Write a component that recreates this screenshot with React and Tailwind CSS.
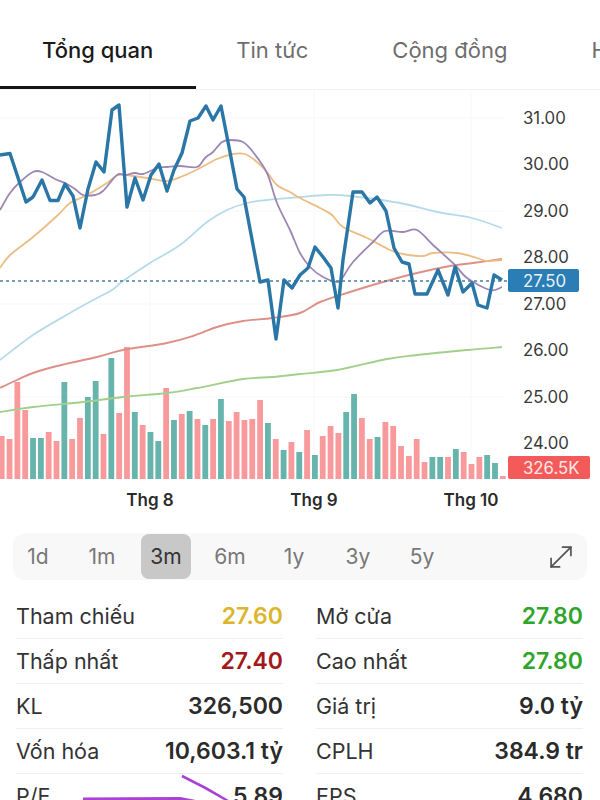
import React from 'react';
import { MoveDiagonal } from 'lucide-react';

const TABS = ['Tổng quan', 'Tin tức', 'Cộng đồng', 'Hồ sơ'];
const RANGES = ['1d', '1m', '3m', '6m', '1y', '3y', '5y'];

const PRICE = [[0,155],[10,153.5],[26,202],[33,197],[42,180],[50,200.5],[58,200.5],[65,184],[73,196],[80,228],[88,189],[96,162],[104,172],[112,110],[119,105],[127,207],[135,178],[143,200],[151,175],[159,164],[167,191],[174,170],[182,153],[190,121],[198,118],[206,106],[213,120],[221,106],[229,147],[237,189],[244,197],[260,282],[268,280],[276,339],[284,280],[292,288],[300,275],[308,268],[315,247],[323,257],[331,268],[338,308],[343,260],[353,192],[362,192],[370,203],[377,197],[386,211],[394,248],[402,262],[409,264],[415,294],[427,294],[438,270],[448,295],[455,267],[463,292],[472,283],[478,305],[487,308],[494,275],[502,280]];
const PURPLE = [[0,210],[10,193],[20,182],[33,172],[42,172],[55,179],[65,183],[75,189],[83,195],[95,195],[103,191],[117,175],[125,175],[135,173],[143,174],[157,168],[167,167],[180,166],[197,167],[205,158],[213,152],[222,142],[230,140],[243,142],[253,152],[267,173],[277,203],[290,230],[300,253],[310,267],[323,277],[338,282],[343,277],[353,262],[373,242],[385,231],[403,232],[417,230],[433,245],[455,265],[467,278],[490,290],[502,287]];
const ORANGE = [[0,268],[10,255],[33,237],[58,215],[70,203],[87,195],[107,183],[118,175],[133,176],[147,178],[167,181],[183,176],[200,168],[217,159],[233,154],[245,154],[257,162],[267,172],[277,185],[290,192],[300,198],[320,208],[332,215],[343,227],[367,238],[390,250],[403,254],[423,256],[433,253],[457,253],[477,258],[487,261],[502,260]];
const SKY = [[0,360],[33,335],[70,313],[97,298],[112,290],[123,281],[150,263],[180,245],[207,222],[227,210],[247,203],[267,200],[300,197],[327,195],[350,196],[400,203],[437,212],[472,218],[502,228]];
const RED = [[0,388],[17,380],[33,373],[57,366],[97,357],[123,350],[167,343],[193,336],[217,327],[243,321],[273,318],[300,313],[320,302],[350,292],[383,282],[417,273],[450,266],[473,263],[502,259]];
const GREEN = [[0,412],[33,407],[83,402],[123,397],[167,393],[197,388],[243,379],[273,377],[300,374],[337,370],[387,359],[417,355],[467,350],[502,347]];

// r = sell, g = buy; number is the top of the bar
const VOLUME = [
  ['r',436],['r',439],['r',382],['r',410],['g',438],['g',438],['r',432],['r',441],['g',382],['r',439],['r',418],['g',397],['g',381],
  ['r',434],['g',358],['r',413],['r',347],['g',412],['r',425],['g',432],['g',441],['r',388],['g',420],['r',414],['g',411],['r',419],
  ['g',425],['r',419],['g',399],['r',421],['r',412],['r',420],['r',419],['r',400],['g',423],['r',439],['g',450],['r',442],['g',452],
  ['r',430],['g',455],['r',436],['r',426],['r',433],['g',412],['g',394],['r',418],['r',439],['g',437],['r',422],['r',426],['r',446],
  ['r',456],['r',439],['r',462],['g',457],['g',457],['r',457],['g',449],['r',452],['r',464],['r',457],['g',455],['g',463],['r',476],
];

const AXIS = [['31.00',118],['30.00',164.5],['29.00',211],['28.00',257.5],['27.00',304],['26.00',350.5],['25.00',397],['24.00',443.5]];
const MONTHS = [['Thg 8',150],['Thg 9',314],['Thg 10',471]];

const STATS = [
  [['Tham chiếu', '27.60', 'text-[#dcb52c]'], ['Mở cửa', '27.80', 'text-[#2fa52b]']],
  [['Thấp nhất', '27.40', 'text-[#a3181c]'], ['Cao nhất', '27.80', 'text-[#2fa52b]']],
  [['KL', '326,500', 'text-[#2b2b2b]'], ['Giá trị', '9.0 tỷ', 'text-[#2b2b2b]']],
  [['Vốn hóa', '10,603.1 tỷ', 'text-[#2b2b2b]'], ['CPLH', '384.9 tr', 'text-[#2b2b2b]']],
  [['P/E', '5.89', 'text-[#2b2b2b]'], ['EPS', '4,680', 'text-[#2b2b2b]']],
];

const toPoints = (line) => line.map(([x, y]) => `${x},${y}`).join(' ');

// moving averages are drawn smooth, catmull-rom through the points
const toCurve = (line) => {
  let d = `M${line[0][0]} ${line[0][1]}`;
  for (let i = 0; i < line.length - 1; i++) {
    const p0 = line[i - 1] || line[i];
    const p1 = line[i];
    const p2 = line[i + 1];
    const p3 = line[i + 2] || p2;
    const c1x = p1[0] + (p2[0] - p0[0]) / 6;
    const c1y = p1[1] + (p2[1] - p0[1]) / 6;
    const c2x = p2[0] - (p3[0] - p1[0]) / 6;
    const c2y = p2[1] - (p3[1] - p1[1]) / 6;
    d += ` C${c1x} ${c1y} ${c2x} ${c2y} ${p2[0]} ${p2[1]}`;
  }
  return d;
};

function Chart() {
  return (
    <svg viewBox="0 90 600 420" className="block w-[600px] h-[420px]">
      {[118, 211, 304, 397].map((y) => (
        <line key={y} x1="0" x2="505" y1={y} y2={y} stroke="#f7f7f7" />
      ))}
      {[150, 314, 471].map((x) => (
        <line key={x} x1={x} x2={x} y1="90" y2="479" stroke="#f7f7f7" />
      ))}
      {VOLUME.map(([kind, top], i) => (
        <rect
          key={i}
          x={1.7 + i * 7.83 - 2.9}
          y={top}
          width="5.8"
          height={479 - top}
          fill={kind === 'r' ? '#f89a9c' : '#66b4ac'}
        />
      ))}
      <path d={toCurve(GREEN)} fill="none" stroke="#a3cf8c" strokeWidth="1.8" />
      <path d={toCurve(RED)} fill="none" stroke="#dd8f88" strokeWidth="1.9" />
      <path d={toCurve(SKY)} fill="none" stroke="#b5dbea" strokeWidth="1.8" />
      <path d={toCurve(ORANGE)} fill="none" stroke="#ecbd84" strokeWidth="1.8" />
      <path d={toCurve(PURPLE)} fill="none" stroke="#9d85b5" strokeWidth="1.8" />
      <line x1="0" x2="508" y1="281" y2="281" stroke="#4a7f9e" strokeWidth="1.5" strokeDasharray="3 3" />
      <polyline points={toPoints(PRICE)} fill="none" stroke="#2a76a6" strokeWidth="3.4" strokeLinejoin="round" />

      {AXIS.map(([label, y]) => (
        <text key={label} x="523" y={y} dy="5.8" fontSize="16.8" fill="#3a3a3a">{label}</text>
      ))}
      <rect x="508" y="269" width="71" height="23" rx="2" fill="#2b7db5" />
      <text x="523" y="281" dy="5.8" fontSize="16.8" fill="#e8f3fa">27.50</text>
      <rect x="508" y="456" width="82" height="23" rx="2" fill="#f55a5a" />
      <text x="523" y="468" dy="5.8" fontSize="16.8" fill="#fde8e8">326.5K</text>
      {MONTHS.map(([label, x]) => (
        <text key={label} x={x} y="506" textAnchor="middle" fontSize="17" fontWeight="600" fill="#2b2b2b">{label}</text>
      ))}
    </svg>
  );
}

function StatCell({ label, value, color }) {
  return (
    <div className="flex items-center justify-between h-[45px] border-b border-[#f0f0f0]">
      <span className="text-[21.5px] text-[#333]">{label}</span>
      <span className={`text-[23px] font-semibold ${color}`}>{value}</span>
    </div>
  );
}

export default function App() {
  return (
    <div className="relative w-[600px] h-[800px] overflow-hidden bg-white font-['Inter',sans-serif]">
      <div className="flex h-[90px] border-b border-[#f3f3f3] whitespace-nowrap text-[22px]">
        {TABS.map((tab, i) => (
          <div
            key={tab}
            className={`shrink-0 flex items-center pt-[15px] border-b-[3px] ${i === 0 ? 'pl-[42px] pr-[43px] border-[#151515] text-[#1a1a1a] font-medium' : 'pl-[40px] pr-[44px] border-transparent text-[#6e6e6e]'}`}
          >
            {tab}
          </div>
        ))}
      </div>

      <Chart />

      <div className="mx-[13px] mt-[23px] h-[47px] flex items-center justify-between pr-[9px] rounded-xl bg-[#f8f8f8]">
        <div className="flex items-center gap-[14px] text-[21px] text-[#777]">
          {RANGES.map((range) => (
            <div
              key={range}
              className={`w-[50px] h-[45px] flex items-center justify-center ${range === '3m' ? 'rounded-lg bg-[#c8c8c8] text-[#333]' : ''}`}
            >
              {range}
            </div>
          ))}
        </div>
        <MoveDiagonal className="w-[34px] h-[34px] text-[#555]" strokeWidth={1.2} />
      </div>

      <div className="mt-[14px] px-[16px] grid grid-cols-[267px_267px] gap-x-[33px]">
        {STATS.map((row) =>
          row.map(([label, value, color]) => (
            <StatCell key={label} label={label} value={value} color={color} />
          ))
        )}
      </div>

      <svg viewBox="0 0 600 800" className="absolute inset-0 w-[600px] h-[800px] pointer-events-none">
        <path d="M83 801 L180 800.5 L198 804" fill="none" stroke="#a941d4" strokeWidth="7" />
        <path d="M182 776 Q205 787 228 801" fill="none" stroke="#a941d4" strokeWidth="2.5" />
      </svg>
    </div>
  );
}
